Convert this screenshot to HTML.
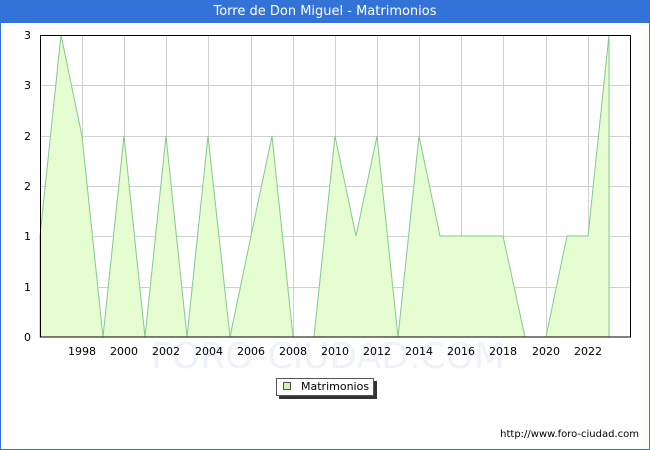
<!DOCTYPE html>
<html><head><style>
body{margin:0;width:650px;height:450px;overflow:hidden;background:#fff;font-family:"DejaVu Sans","Liberation Sans",sans-serif;}
.frame{position:absolute;left:0;top:0;width:648px;height:448px;border:1px solid #3373d7;}
.title{position:absolute;left:0;top:0;width:650px;height:23px;background:#3373d7;color:#fff;font-size:13px;line-height:23px;text-align:center;}
</style></head><body>
<div class="frame"></div>
<div class="title">Torre de Don Miguel - Matrimonios</div>
<svg width="650" height="450" style="position:absolute;left:0;top:0" font-family="DejaVu Sans, Liberation Sans, sans-serif" font-size="11">
<text x="328" y="368" font-size="36" fill="#f0f2fa" text-anchor="middle">FORO-CIUDAD.COM</text>
<g stroke="#d0d0d0" stroke-width="1">
<line x1="40" x2="630" y1="85.5" y2="85.5"/><line x1="40" x2="630" y1="136.5" y2="136.5"/><line x1="40" x2="630" y1="186.5" y2="186.5"/><line x1="40" x2="630" y1="236.5" y2="236.5"/><line x1="40" x2="630" y1="287.5" y2="287.5"/>
<line x1="82.5" x2="82.5" y1="35" y2="337"/><line x1="124.5" x2="124.5" y1="35" y2="337"/><line x1="166.5" x2="166.5" y1="35" y2="337"/><line x1="208.5" x2="208.5" y1="35" y2="337"/><line x1="251.5" x2="251.5" y1="35" y2="337"/><line x1="293.5" x2="293.5" y1="35" y2="337"/><line x1="335.5" x2="335.5" y1="35" y2="337"/><line x1="377.5" x2="377.5" y1="35" y2="337"/><line x1="419.5" x2="419.5" y1="35" y2="337"/><line x1="461.5" x2="461.5" y1="35" y2="337"/><line x1="503.5" x2="503.5" y1="35" y2="337"/><line x1="546.5" x2="546.5" y1="35" y2="337"/><line x1="588.5" x2="588.5" y1="35" y2="337"/>
</g>
<polygon fill="#e5fdd0" stroke="#82c98e" stroke-width="1" points="40,337 40,236 61,35 82,136 103,337 124,136 145,337 166,136 187,337 208,136 230,337 251,236 272,136 293,337 314,337 335,136 356,236 377,136 398,337 419,136 440,236 461,236 482,236 503,236 525,337 546,337 567,236 588,236 609,35 609,337"/>
<rect x="40.5" y="35.5" width="590" height="301.5" fill="none" stroke="#000"/>
<g text-anchor="end"><text x="31" y="341">0</text><text x="31" y="291">1</text><text x="31" y="240">1</text><text x="31" y="190">2</text><text x="31" y="140">2</text><text x="31" y="89">3</text><text x="31" y="39">3</text></g>
<g text-anchor="middle"><text x="82" y="355">1998</text><text x="124" y="355">2000</text><text x="166" y="355">2002</text><text x="209" y="355">2004</text><text x="251" y="355">2006</text><text x="293" y="355">2008</text><text x="335" y="355">2010</text><text x="377" y="355">2012</text><text x="419" y="355">2014</text><text x="461" y="355">2016</text><text x="503" y="355">2018</text><text x="546" y="355">2020</text><text x="588" y="355">2022</text></g>
<rect x="279" y="381" width="98" height="18" fill="#333"/>
<rect x="276.5" y="378.5" width="97" height="17" fill="#fff" stroke="#555"/>
<rect x="283.5" y="382.5" width="7" height="7" fill="#ccf5a8" stroke="#555"/>
<text x="301" y="390">Matrimonios</text>
<text x="639" y="437" text-anchor="end" font-size="10">http://www.foro-ciudad.com</text>
</svg>
</body></html>
